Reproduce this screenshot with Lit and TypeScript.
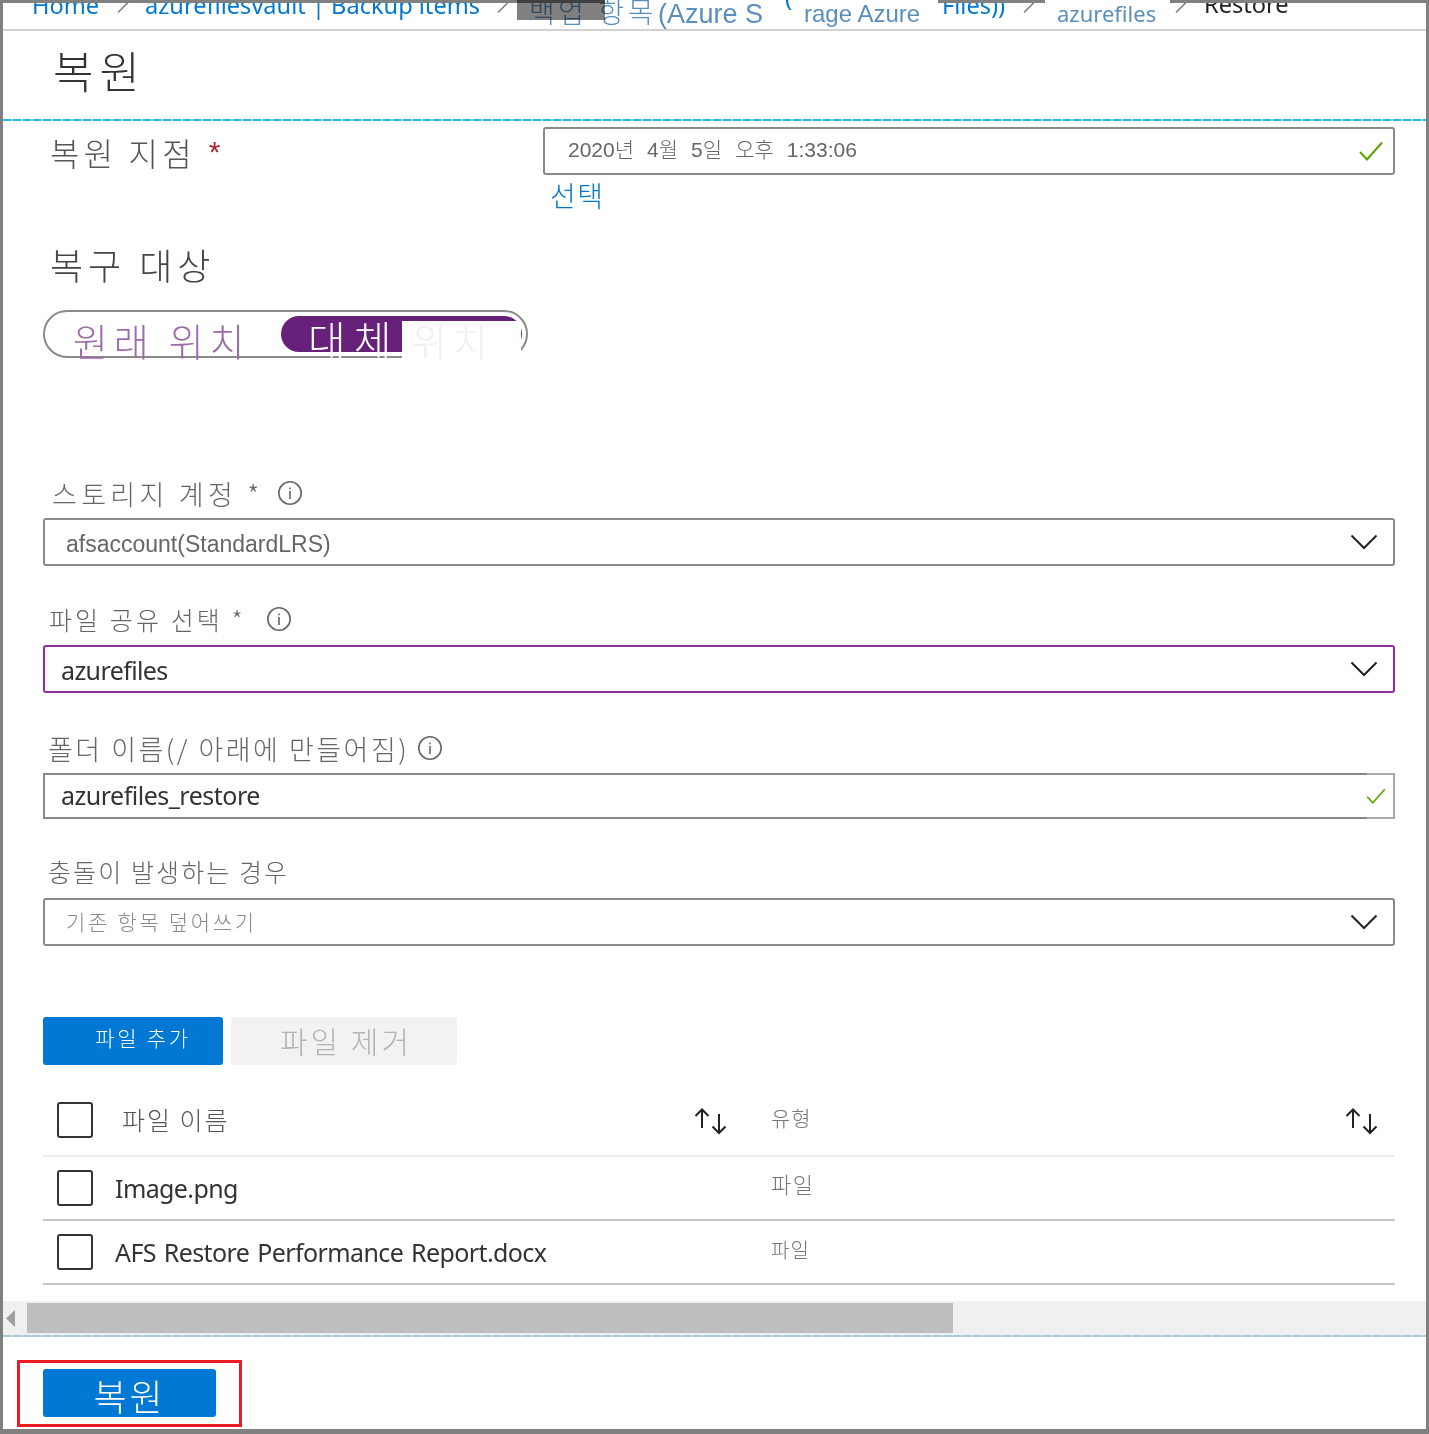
import { LitElement, html, css } from "lit";
import { customElement } from "lit/decorators.js";

const chevron = html`<svg class="chev" width="28" height="16" viewBox="0 0 28 16"><path d="M1.5 1.5 L14 14 L26.5 1.5" fill="none" stroke="#222" stroke-width="2"/></svg>`;
const info = html`<svg class="info" width="26" height="26" viewBox="0 0 26 26"><circle cx="13" cy="13" r="11.2" fill="none" stroke="#666" stroke-width="1.6"/><rect x="12.2" y="11" width="1.6" height="8" fill="#666"/><rect x="12.2" y="7.5" width="1.6" height="1.8" fill="#666"/></svg>`;
const sort = html`<svg class="sort" width="34" height="27" viewBox="0 0 34 27"><path d="M8 20V1.5M1.5 8L8 1.5L14.5 8M25 6V25M18.5 18.5L25 25L31.5 18.5" fill="none" stroke="#222" stroke-width="2"/></svg>`;
const check = (w: number, h: number) => html`<svg width="${w}" height="${h}" viewBox="0 0 24 20"><path d="M1 11L8 18.5L23 1.5" fill="none" stroke="#57a300" stroke-width="2"/></svg>`;
const sep = (x: number) => html`<svg class="sep" style="left:${x}px" width="14" height="13" viewBox="0 0 14 13"><path d="M1 12.5L13 0.5" stroke="#777" stroke-width="1.4" fill="none"/></svg>`;

@customElement("app-root")
export class AppRoot extends LitElement {
  static styles = css`
    :host { display: block; width: 1429px; height: 1434px; position: relative; overflow: hidden; background: #fff;
      font-family: "Noto Sans", "Noto Sans CJK KR", sans-serif; }
    *, *::after { box-sizing: border-box; }
    .frame { width: 1429px; height: 1434px; border-left: 3px solid #808080; border-right: 3px solid #808080; border-bottom: 5px solid #808080; display: flex; flex-direction: column; }
    .topstrip { position: absolute; left: 0; top: 0; width: 100%; height: 3px; display: flex; }
    .topstrip i { display: block; height: 3px; background: #808080; }
    .t1 { width: 605px; } .t2 { width: 333px; } .t3 { width: 107px; } .t4 { width: 125px; } .t5 { flex: 1; }
    .patch { position: absolute; left: 517px; top: 0; width: 88px; height: 20px; background: #808080; mix-blend-mode: multiply; }
    .crumbs { height: 29px; overflow: hidden; position: relative; flex: none; font-size: 23.6px; white-space: nowrap; }
    .crumbs span { position: absolute; line-height: 30px; }
    .crumbs .sep { position: absolute; top: 0; }
    .a { color: #0078d4; top: -10px; }
    .b { color: #5a8fbd; top: -1px; font-family: "Liberation Sans", "Noto Sans CJK KR", sans-serif; font-size: 24px; }
    .crumbs .b1 { font-size: 28px; letter-spacing: 3.4px; top: -1px; font-weight: 300; }
    .crumbs .b2 { font-size: 27px; top: -1px; }
    .tick { color: #0078d4; top: -18px; font-size: 24px; }
    .c { color: #5a8fbd; font-size: 22px; top: -2px; left: 1054px; }
    .r { color: #222; top: -11px; left: 1201px; }
    .line { height: 2px; background: #d2d2d2; flex: none; }
    .title { height: 88px; flex: none; padding: 8px 0 0 50px; font: 300 44px/62px "Noto Sans CJK KR", sans-serif; color: #333; letter-spacing: 6px; }
    .dash { height: 2px; flex: none; background-image: repeating-linear-gradient(90deg, #1db9ec 0 8px, #c9c9c9 8px 10px); }
    .dash.low { background-image: repeating-linear-gradient(90deg, #a0cdd6 0 8px, #d6d6d6 8px 10px); }
    .form { flex: none; height: 1180px; padding: 0 31px 0 40px; display: flex; flex-direction: column; font-weight: 300; }
    .restore { display: flex; height: 54px; margin-top: 6px; align-items: flex-start; }
    .restore .lab { width: 500px; padding-left: 7px; font: 300 32px/50px "Noto Sans CJK KR", sans-serif; color: #555; letter-spacing: 4.2px; }
    .restore .lab b { color: #a4262c; font-weight: 400; margin-left: 13px; font-size: 30px; font-family: "Liberation Sans", sans-serif; }
    .box { height: 48px; border: 2px solid #8a8a8a; border-radius: 3px; display: flex; align-items: center; position: relative; flex: none; }
    .restore .box { flex: 1; padding: 0 10px 7px 23px; font: 300 21px "Liberation Sans", "Noto Sans CJK KR", sans-serif; color: #666; justify-content: space-between; word-spacing: 7.2px; }
    .restore .box svg { margin-top: 7px; }
    .link { margin: -1px 0 0 507px; color: #0078d4; font: 300 28px/30px "Noto Sans CJK KR", sans-serif; letter-spacing: 1.6px; height: 32px; }
    .h2 { margin: 27px 0 0 7px; font: 300 36px/50px "Noto Sans CJK KR", sans-serif; color: #444; letter-spacing: 5px; height: 50px; }
    .toggle { margin-top: 21px; width: 485px; height: 48px; border: 2px solid #8a8a8a; border-radius: 24px; position: relative; font: 300 38px/48px "Noto Sans CJK KR", sans-serif; white-space: nowrap; }
    .opt1 { color: #9c6ca8; position: absolute; left: 28px; top: 4px; letter-spacing: 5.8px; }
    .pill { position: absolute; left: 236px; top: 4px; width: 241px; height: 36px; border-radius: 18px; background: #68217a; }
    .cover { position: absolute; left: 357px; top: 9px; width: 119px; height: 38px; background: #fff; }
    .opt2 { position: absolute; left: 263px; top: 2px; color: #fff; font-size: 41px; letter-spacing: 8px; }
    .opt2 em { font-style: normal; color: #f0f0f0; font-size: 38px; letter-spacing: 6px; margin-left: -2px; }
    .lab { display: flex; align-items: center; font-family: "Noto Sans CJK KR", sans-serif; color: #666; flex: none; white-space: nowrap; }
    .l1 { margin-top: 115px; height: 40px; margin-bottom: 5px; padding-left: 9px; font-size: 27px; letter-spacing: 4.3px; }
    .l2 { margin-top: 33px; height: 40px; margin-bottom: 6px; padding-left: 6px; font-size: 25px; letter-spacing: 3.1px; }
    .l3 { margin-top: 35px; height: 40px; margin-bottom: 5px; padding-left: 5px; font-size: 27px; letter-spacing: 2.5px; }
    .l4 { margin-top: 32px; height: 40px; margin-bottom: 7px; padding-left: 5px; font-size: 25px; letter-spacing: 2.1px; }
    .l1 .info { margin-left: 13px; } .l2 .info { margin-left: 20px; } .l3 .info { margin-left: 8px; }
    .sel { justify-content: space-between; padding-right: 15px; }
    .sel.v1 { padding-left: 21px; font: 23px "Liberation Sans", sans-serif; color: #666; }
    .sel.v1 .val { padding-top: 4px; }
    .sel.v2 { padding-left: 16px; border-color: #8e2ca0; font-size: 25px; letter-spacing: -0.6px; color: #333; font-weight: 400; }
    .sel.v2 .val { padding-top: 1px; }
    .sel.v4 { padding-left: 21px; font: 300 21px "Noto Sans CJK KR", sans-serif; color: #8a8a8a; letter-spacing: 2.7px; }
    .sel.v4 .val { padding-bottom: 3px; }
    .folder { height: 46px; border-radius: 0; padding-left: 16px; font-size: 25px; font-weight: 400; letter-spacing: -0.5px; color: #333; justify-content: space-between; padding-right: 7px; }
    .folder .val { padding-bottom: 2px; }
    .folder::after { content: ""; position: absolute; right: -2px; top: -2px; width: 28px; height: 46px; border: 2px solid #aaa; border-left: none; }
    .btns { display: flex; gap: 8px; margin-top: 71px; flex: none; }
    .btn { height: 48px; border-radius: 3px; display: flex; align-items: center; justify-content: center; font-family: "Noto Sans CJK KR", sans-serif; font-weight: 300; }
    .add { width: 180px; background: #0078d4; color: #fff; font-size: 21px; letter-spacing: 2.7px; padding: 0 0 8px 20px; }
    .rem { width: 226px; background: #f3f2f1; color: #b4b4b4; font-size: 30px; letter-spacing: 3px; padding: 0 0 3px 4px; }
    .row { display: flex; align-items: center; flex: none; width: 1352px; border-bottom: 2px solid #c8c8c8; position: relative; }
    .row.head { margin-top: 26px; height: 66px; border-bottom-color: #ebebeb; padding-bottom: 6px; }
    .row.item { height: 64px; }
    .cb { width: 36px; height: 36px; border: 2px solid #333; border-radius: 3px; margin-left: 14px; flex: none; }
    .name { margin-left: 22px; width: 656px; font-size: 25px; font-weight: 400; letter-spacing: -0.6px; word-spacing: 2px; color: #333; white-space: nowrap; flex: none; }
    .head .name { margin-left: 29px; width: 572px; padding-bottom: 2px; font: 300 25px "Noto Sans CJK KR", sans-serif; color: #555; letter-spacing: 2px; word-spacing: 0; }
    .type { font: 300 20px "Noto Sans CJK KR", sans-serif; color: #777; letter-spacing: 1px; flex: none; }
    .head .type { margin-left: 43px; width: 574px; padding-bottom: 6px; font-size: 21px; }
    .item .type { padding-bottom: 6px; }
    .item .type.big { font-size: 22px; letter-spacing: 1.4px; padding-bottom: 10px; }
    .sort { flex: none; margin-top: 2px; }
    .scroll { height: 34px; flex: none; background: #f0f0f0; padding: 2px 0; display: flex; align-items: stretch; }
    .arrow { width: 24px; flex: none; display: flex; align-items: center; padding-left: 3px; }
    .thumb { width: 926px; background: #bebebe; }
    .foot { flex: 1; padding: 23px 0 0 14px; }
    .redbox { width: 225px; height: 67px; border: 3px solid #ed1c24; padding: 6px 0 0 23px; }
    .go { width: 173px; height: 48px; background: #0078d4; color: #fff; font-size: 36px; letter-spacing: 3px; padding-top: 3px; }
  `;
  render() {
    return html`
      <div class="frame">
        <div class="crumbs">
          <span class="a" style="left:29px">Home</span>
          ${sep(114)}
          <span class="a" style="left:142px">azurefilesvault | Backup items</span>
          ${sep(494)}
          <span class="b b1" style="left:526px">백업 항목</span>
          <span class="b b2" style="left:655px">(Azure S</span>
          <span class="tick" style="left:782px">(</span>
          <span class="b" style="left:801px">rage Azure</span>
          <span class="a" style="left:939px">Files))</span>
          ${sep(1020)}
          <span class="c">azurefiles</span>
          ${sep(1172)}
          <span class="r">Restore</span>
        </div>
        <div class="line"></div>
        <div class="title">복원</div>
        <div class="dash"></div>
        <div class="form">
          <div class="restore">
            <div class="lab">복원 지점 <b>*</b></div>
            <div class="box"><span>2020년 4월 5일 오후 1:33:06</span> ${check(24, 20)}</div>
          </div>
          <div class="link">선택</div>
          <div class="h2">복구 대상</div>
          <div class="toggle">
            <span class="opt1">원래 위치</span>
            <div class="pill"></div>
            <div class="cover"></div>
            <span class="opt2">대체<em> 위치</em></span>
          </div>
          <div class="lab l1">스토리지 계정 * ${info}</div>
          <div class="box sel v1"><span class="val">afsaccount(StandardLRS)</span> ${chevron}</div>
          <div class="lab l2">파일 공유 선택 * ${info}</div>
          <div class="box sel v2"><span class="val">azurefiles</span> ${chevron}</div>
          <div class="lab l3">폴더 이름(/ 아래에 만들어짐) ${info}</div>
          <div class="box folder"><span class="val">azurefiles_restore</span> ${check(20, 16)}</div>
          <div class="lab l4">충돌이 발생하는 경우</div>
          <div class="box sel v4"><span class="val">기존 항목 덮어쓰기</span> ${chevron}</div>
          <div class="btns">
            <div class="btn add">파일 추가</div>
            <div class="btn rem">파일 제거</div>
          </div>
          <div class="row head">
            <div class="cb"></div><div class="name">파일 이름</div>${sort}
            <div class="type">유형</div>${sort}
          </div>
          <div class="row item"><div class="cb"></div><div class="name">Image.png</div><div class="type big">파일</div></div>
          <div class="row item"><div class="cb"></div><div class="name">AFS Restore Performance Report.docx</div><div class="type">파일</div></div>
        </div>
        <div class="scroll">
          <div class="arrow"><svg width="9" height="17" viewBox="0 0 9 17"><path d="M9 0V17L0 8.5Z" fill="#a0a0a0"/></svg></div>
          <div class="thumb"></div>
        </div>
        <div class="dash low"></div>
        <div class="foot">
          <div class="redbox"><div class="btn go">복원</div></div>
        </div>
      </div>
      <div class="topstrip">
        <i class="t1"></i><span class="t2"></span><i class="t3"></i><span class="t4"></span><i class="t5"></i>
      </div>
      <div class="patch"></div>
    `;
  }
}
